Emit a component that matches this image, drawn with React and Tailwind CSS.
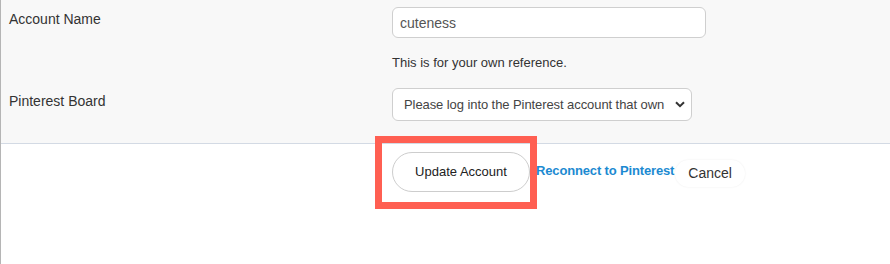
export default function App() {
  return (
    <div className="relative h-[264px] w-[890px] overflow-hidden border-l border-[#b5b5b5] bg-white font-['Liberation_Sans',Arial,sans-serif] text-[#333]">
      <div className="h-[144px] border-b border-[#d3dae4] bg-[#f8f8f8] pt-[7px]">
        <div className="flex">
          <div className="w-[391px] pl-[8px] pt-[2px] text-[14px] leading-[20px]">Account Name</div>
          <div>
            <input
              className="h-[31px] w-[314px] rounded-[6px] border border-[#cfcfcf] bg-white px-[7px] text-[14px] text-[#555] outline-none"
              defaultValue="cuteness"
            />
            <p className="mt-[16px] text-[13px] leading-[18px]">This is for your own reference.</p>
          </div>
        </div>
        <div className="mt-[16px] flex">
          <div className="w-[391px] pl-[8px] pt-[3px] text-[14px] leading-[20px]">Pinterest Board</div>
          <div className="flex h-[33px] w-[300px] items-center justify-between rounded-[6px] border border-[#cfcfcf] bg-white pl-[11px] pr-[6px] text-[13px] text-[#444]">
            <span className="whitespace-nowrap tracking-[-0.08px]">Please log into the Pinterest account that own</span>
            <svg className="shrink-0" width="10" height="7" viewBox="0 0 10 7" fill="none">
              <path d="M1 1.2 L5 5.2 L9 1.2" stroke="#333" strokeWidth="2" />
            </svg>
          </div>
        </div>
      </div>
      <div className="flex items-center pl-[391px] pt-[8px]">
        <button className="h-[40px] w-[138px] rounded-full border border-[#cdcdcd] bg-white text-[13px] text-[#222]">
          Update Account
        </button>
        <a className="ml-[6px] mb-[2px] text-[13px] font-bold tracking-[-0.15px] text-[#1c8ad1]">Reconnect to Pinterest</a>
        <button className="ml-[1px] mt-[2px] h-[27px] rounded-full bg-white px-[13px] text-[14px] text-[#333] shadow-[0_0_2px_rgba(0,0,0,0.08)]">
          Cancel
        </button>
      </div>
      <div className="pointer-events-none absolute left-[374px] top-[136px] h-[73px] w-[162px] border-[7px] border-[#ff5f52]" />
    </div>
  );
}
